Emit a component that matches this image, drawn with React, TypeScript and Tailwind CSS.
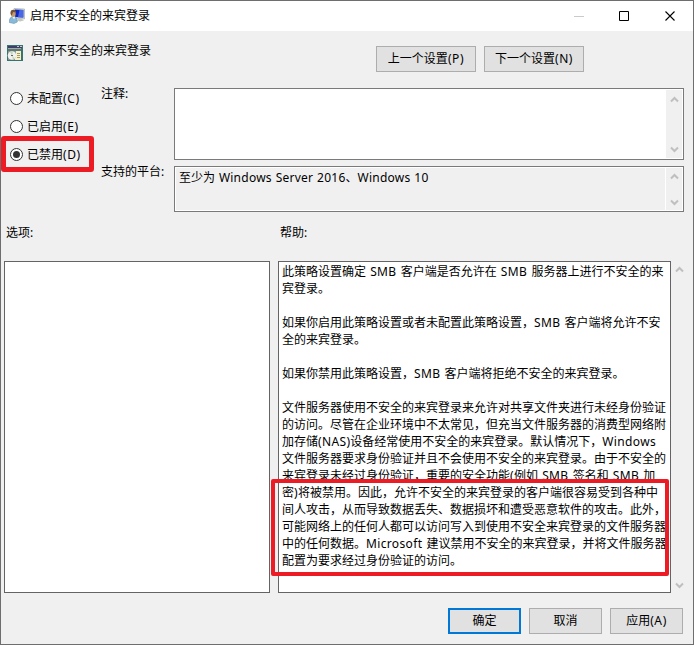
import React from 'react';

const HELP_LINES = [
  '此策略设置确定 SMB 客户端是否允许在 SMB 服务器上进行不安全的来',
  '宾登录。',
  '',
  '如果你启用此策略设置或者未配置此策略设置，SMB 客户端将允许不安',
  '全的来宾登录。',
  '',
  '如果你禁用此策略设置，SMB 客户端将拒绝不安全的来宾登录。',
  '',
  '文件服务器使用不安全的来宾登录来允许对共享文件夹进行未经身份验证',
  '的访问。尽管在企业环境中不太常见，但充当文件服务器的消费型网络附',
  '加存储(NAS)设备经常使用不安全的来宾登录。默认情况下，Windows',
  '文件服务器要求身份验证并且不会使用不安全的来宾登录。由于不安全的',
  '来宾登录未经过身份验证，重要的安全功能(例如 SMB 签名和 SMB 加',
  '密)将被禁用。因此，允许不安全的来宾登录的客户端很容易受到各种中',
  '间人攻击，从而导致数据丢失、数据损坏和遭受恶意软件的攻击。此外，',
  '可能网络上的任何人都可以访问写入到使用不安全来宾登录的文件服务器',
  '中的任何数据。Microsoft 建议禁用不安全的来宾登录，并将文件服务器',
  '配置为要求经过身份验证的访问。',
];

interface MixedProps {
  text: string;
  className?: string;
}

// Latin runs are set slightly wider than the ideographs around them
const Mixed: React.FC<MixedProps> = ({ text, className = 'tracking-[0.35px] [word-spacing:0.7px]' }) => (
  <>
    {text.split(/([\x20-\x7e]+)/).map((part, i) =>
      i % 2 ? (
        <span key={i} className={className}>{part}</span>
      ) : (
        part
      )
    )}
  </>
);

interface ButtonProps {
  label: string;
  className: string;
}

const Button: React.FC<ButtonProps> = ({ label, className }) => (
  <button className={`h-[26px] bg-[#e1e1e1] flex items-center justify-center ${className}`}>
    <span className="-mt-px"><Mixed text={label} className="tracking-[0.6px]" /></span>
  </button>
);

const Radio: React.FC<{ label: string; checked?: boolean }> = ({ label, checked }) => (
  <label className="flex items-center h-7 gap-1">
    <svg className="w-[13px] h-[13px]" viewBox="0 0 13 13">
      <circle cx="6.5" cy="6.5" r="6" fill="#fff" stroke="#333" />
      {checked && <circle cx="6.5" cy="6.5" r="3.5" fill="#333" />}
    </svg>
    <span><Mixed text={label} className="tracking-[0.6px]" /></span>
  </label>
);

const Arrow: React.FC<{ down?: boolean }> = ({ down }) => (
  <svg className="w-[9px] h-[7px]" viewBox="0 0 9 7" fill="none" stroke="#bfbfbf" strokeWidth="2">
    <path d={down ? 'M1 1.5l3.5 3.5L8 1.5' : 'M1 5.5L4.5 2L8 5.5'} />
  </svg>
);

const ScrollBar: React.FC<{ className: string }> = ({ className }) => (
  <div className={`flex flex-col items-center justify-between bg-[#f0f0f0] shrink-0 ${className}`}>
    <Arrow />
    <Arrow down />
  </div>
);

const UserMonitorIcon = () => (
  <svg className="w-4 h-4" viewBox="0 0 16 16">
    <path d="M5 0.5L15.5 1V11L5 10z" fill="#d5d9dc" stroke="#9ba5ab" strokeWidth="0.6" />
    <path d="M6 1.5L14.3 2V9.5L6 9z" fill="#1229bd" />
    <path d="M10.5 1.8L14.3 2V9.5L9 9.2z" fill="#4868e4" />
    <path d="M9 11h4l2 1.5-4 1-3-1z" fill="#c4c8bd" />
    <path d="M0.3 14.5Q0 9 4 8.5Q8.5 8.5 8.3 14L5 15.5z" fill="#89b9d9" stroke="#5987a8" strokeWidth="0.5" />
    <path d="M3 8.5l2.2 3L6.3 8.5z" fill="#e8f2f6" />
    <ellipse cx="4.2" cy="5.5" rx="2.5" ry="3.4" fill="#c69b6c" />
    <path d="M1.6 6Q1 1.8 4.5 1.8Q7 2 6.6 4.5L4 4L2.8 7.5z" fill="#715235" />
  </svg>
);

const PolicyIcon = () => (
  <svg className="w-4 h-4" viewBox="0 0 16 16" shapeRendering="crispEdges">
    <path d="M0 0h16v16H0z" fill="#37736f" />
    <path d="M1 1h14v2H1z" fill="#3d3e68" />
    <path d="M10 1h2v1h-2zM13 1h2v1h-2z" fill="#c5c8c9" />
    <path d="M1 3h13v1H1z" fill="#a5a9a6" />
    <path d="M1 4h13v2H1z" fill="#5d7774" />
    <path d="M1 6h9v9H1z" fill="#8b9693" />
    <circle cx="5" cy="10.5" r="4.3" fill="#f0f1ee" shapeRendering="auto" />
    <path d="M5 10.5L3 7l3-.5zM5 10.5l3 3-2 1z" fill="#c1d5bd" shapeRendering="auto" />
    <circle cx="5" cy="10.5" r="1" fill="#596966" />
    <path d="M9 6h5v9H8v-2h1z" fill="#f6efcc" />
    <path d="M10 8h3v1h-3zM10 10h3v1h-3zM10 12h3v1h-3z" fill="#a49969" />
  </svg>
);

export default function App() {
  return (
    <div className="relative w-[694px] h-[645px] overflow-hidden flex flex-col border border-[#6e6e6e] bg-[#f0f0f0] text-black text-[12px] leading-[17px] whitespace-nowrap font-['Noto_Sans','Noto_Sans_CJK_SC',sans-serif]">
      <header className="h-[30px] bg-white flex items-center shrink-0 pl-2">
        <UserMonitorIcon />
        <span className="ml-[5px] -mt-px">启用不安全的来宾登录</span>
        <svg className="ml-auto mr-[17px] w-[102px] h-[11px]" viewBox="0 0 102 11" fill="none">
          <path d="M0 5.5h10" stroke="#cacaca" />
          <path d="M45.5 0.5h9v9h-9z" stroke="#000" />
          <path d="M91.5 0.5l9 9M100.5 0.5l-9 9" stroke="#000" strokeWidth="1.1" />
        </svg>
      </header>

      <div className="h-[57px] shrink-0 flex items-start pl-1.5">
        <div className="mt-3.5"><PolicyIcon /></div>
        <span className="ml-2 mt-[11px] w-[345px]">启用不安全的来宾登录</span>
        <div className="flex gap-2 mt-[15px]">
          <Button label="上一个设置(P)" className="w-[100px] border border-[#adadad]" />
          <Button label="下一个设置(N)" className="w-[100px] border border-[#adadad]" />
        </div>
      </div>

      <div className="h-[124px] shrink-0 flex pr-[9px]">
        <div className="relative w-[91px] pl-[9px] shrink-0">
          <div className="-mt-[4px]">
            <Radio label="未配置(C)" />
            <Radio label="已启用(E)" />
            <Radio label="已禁用(D)" checked />
          </div>
          <div className="absolute left-0 top-[48px] w-[93px] h-[36px] border-[5px] border-[#ed1c24] rounded-[3px]" />
        </div>
        <div className="w-[82px] shrink-0 pl-[9px]">
          <div className="h-[78px] -mt-[3px]">注释:</div>
          <div>支持的平台:</div>
        </div>
        <div className="flex-1 flex flex-col gap-1.5">
          <div className="h-[72px] border border-[#7a7a7a] bg-white flex justify-end p-px">
            <ScrollBar className="w-4 pt-[6px] pb-[5px]" />
          </div>
          <div className="h-[46px] border border-[#7a7a7a] flex p-px shadow-[inset_0_0_0_1px_white]">
            <div className="flex-1 pl-[3px] pt-px">
              <Mixed text="至少为 Windows Server 2016、Windows 10" className="tracking-[0.24px] [word-spacing:0.5px]" />
            </div>
            <ScrollBar className="w-[17px] border-l border-white pt-[5px] pb-[4px]" />
          </div>
        </div>
      </div>

      <div className="h-[49px] shrink-0 flex items-start pl-[5px] pt-3">
        <span className="w-[274px]">选项:</span>
        <span>帮助:</span>
      </div>

      <div className="h-[332px] shrink-0 flex pl-[3px]">
        <div className="w-[266px] bg-white border border-[#646464]" />
        <div className="relative ml-2 w-[393px] bg-white border border-[#646464] pl-[3px] pt-px">
          {HELP_LINES.map((line, i) => (
            <div key={i} className="h-[17px]"><Mixed text={line} /></div>
          ))}
          <div className="absolute -left-[8px] top-[217px] w-[398px] h-[97px] border-4 border-[#ed1c24] rounded-[2px]" />
        </div>
        <ScrollBar className="w-[17px] pt-[5px] pb-1" />
      </div>

      <footer className="flex justify-end gap-2 pt-[15px] pr-[10px]">
        <Button label="确定" className="w-[73px] border-2 border-[#0078d7]" />
        <Button label="取消" className="w-[73px] border border-[#adadad]" />
        <Button label="应用(A)" className="w-[73px] border border-[#adadad]" />
      </footer>
    </div>
  );
}
